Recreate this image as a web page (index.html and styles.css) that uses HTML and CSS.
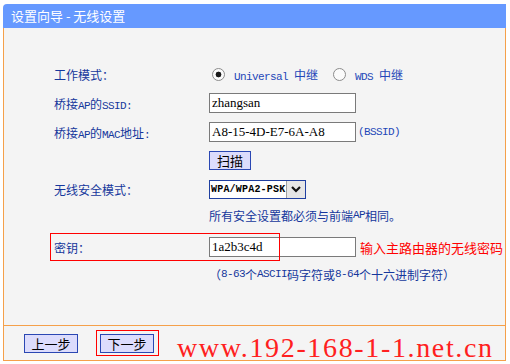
FILE: index.html
```html
<!DOCTYPE html>
<html lang="zh-CN">

<head>
    <meta charset="UTF-8">
    <title>设置向导 - 无线设置</title>
    <link rel="stylesheet" href="styles.css">
</head>

<body>
    <div class="wizard">
        <div class="title">设置向导 - 无线设置</div>
        <div class="panel">
            <div class="row">
                <span class="label">工作模式：</span>
                <span class="value">
                    <span class="radio on"></span><span class="opt"><span class="en">Universal </span>中继</span>
                    <span class="radio second"></span><span class="opt"><span class="en">WDS </span>中继</span>
                </span>
            </div>
            <div class="row r-gap">
                <span class="label">桥接<span class="en">AP</span>的<span class="en">SSID:</span></span>
                <input type="text" class="field" value="zhangsan">
            </div>
            <div class="row r-gap">
                <span class="label">桥接<span class="en">AP</span>的<span class="en">MAC</span>地址<span class="en">:</span></span>
                <input type="text" class="field" value="A8-15-4D-E7-6A-A8">
                <span class="en bssid">(BSSID)</span>
            </div>
            <div class="row r-scan">
                <span class="label"></span>
                <button type="button" class="btn scan">扫描</button>
            </div>
            <div class="row r-sec">
                <span class="label">无线安全模式：</span>
                <div class="select">
                    <span class="sel-text">WPA/WPA2-PSK</span>
                    <span class="arrow">
                        <svg width="12" height="9" viewBox="0 0 12 9"><path d="M2 2 L6 6 L10 2" fill="none" stroke="#111" stroke-width="2.2"/></svg>
                    </span>
                </div>
            </div>
            <div class="row r-note indent">所有安全设置都必须与前端<span class="en">AP</span>相同。</div>
            <div class="row r-key">
                <span class="label">密钥：</span>
                <input type="text" class="field" value="1a2b3c4d">
                <span class="tip">输入主路由器的无线密码</span>
                <span class="mark key-mark"></span>
            </div>
            <div class="row r-hint indent">（<span class="en">8-63</span>个<span class="en">ASCII</span>码字符或<span class="en">8-64</span>个十六进制字符）</div>
        </div>
        <div class="footer">
            <button type="button" class="btn step">上一步</button>
            <span class="marked">
                <button type="button" class="btn step">下一步</button>
                <span class="mark next-mark"></span>
            </span>
            <span class="watermark">www.192-168-1-1.net.cn</span>
        </div>
    </div>
</body>

</html>
```

FILE: styles.css
```css
body {
    margin: 0;
    background-color: #fff;
    font-family: "Noto Sans CJK SC", sans-serif;
}

.wizard {
    width: 503px;
    margin: 4px 0 0 3px;
}

.title {
    height: 24px;
    line-height: 24px;
    padding-left: 8px;
    background-color: #6699ff;
    color: #fff;
    font-size: 13px;
    border-top-left-radius: 4px;
}

.panel {
    height: 297px;
    box-sizing: border-box;
    padding: 36px 0 0 50px;
    background-color: #f4f4f4;
    border-left: 1px solid #f5a04a;
    border-right: 1px solid #f5a04a;
    font-size: 12px;
    color: #15379c;
}

.row {
    display: flex;
    align-items: center;
    height: 20px;
}

.r-gap {
    margin-top: 9px;
}

.r-scan {
    margin-top: 9px;
    height: 19px;
}

.r-sec {
    margin-top: 10px;
    height: 19px;
}

.r-note {
    margin-top: 6px;
}

.r-key {
    margin-top: 12px;
    position: relative;
}

.r-hint {
    margin-top: 7px;
}

.indent {
    padding-left: 155px;
}

.label {
    width: 155px;
    flex: none;
}

.en {
    font-family: "Liberation Mono", monospace;
    font-size: 11px;
    letter-spacing: -0.6px;
}

.value {
    display: flex;
    align-items: center;
    color: #2347b8;
}

.radio {
    width: 13px;
    height: 13px;
    box-sizing: border-box;
    flex: none;
    margin: 0 9px 0 3px;
    border: 1px solid #8c8c8c;
    border-radius: 50%;
    background-color: #fbfbfb;
}

.radio.on {
    background: radial-gradient(circle, #1a1a1a 0 2.6px, #fbfbfb 3.2px);
}

.radio.second {
    margin-left: 15px;
}

.opt {
    white-space: pre;
}

.field {
    width: 147px;
    height: 20px;
    box-sizing: border-box;
    margin: 0;
    padding: 0 2px;
    border: 1px solid #7a7a7a;
    background-color: #fff;
    color: #000;
    font-family: "Liberation Serif", serif;
    font-size: 13px;
    outline: none;
}

.bssid {
    margin-left: 2px;
    color: #2347b8;
}

.btn {
    height: 19px;
    box-sizing: border-box;
    margin: 0;
    padding: 0;
    border: 1px solid #2a47b3;
    background-color: #dcdcfc;
    color: #000;
    font-family: "Noto Sans CJK SC", sans-serif;
    font-size: 13px;
    line-height: 17px;
}

.scan {
    width: 42px;
}

.step {
    width: 54px;
}

.select {
    display: flex;
    width: 97px;
    height: 19px;
    box-sizing: border-box;
    border: 1px solid #1f3fa0;
    background-color: #fff;
}

.sel-text {
    flex: 1;
    padding-left: 1px;
    line-height: 17px;
    color: #000;
    font-family: "Liberation Mono", monospace;
    font-size: 10px;
    font-weight: bold;
    letter-spacing: 0.2px;
}

.arrow {
    width: 18px;
    display: flex;
    align-items: center;
    justify-content: center;
    background-color: #e6e6e6;
    border-left: 1px solid #a0a0a0;
}

.tip {
    margin-left: 4px;
    color: #ff0000;
    font-size: 13px;
    white-space: nowrap;
}

.mark {
    position: absolute;
    box-sizing: border-box;
    border: 1px solid #ff0000;
}

.key-mark {
    left: -4px;
    top: -4px;
    width: 230px;
    height: 28px;
}

.footer {
    position: relative;
    display: flex;
    align-items: flex-start;
    gap: 22px;
    height: 26px;
    padding: 8px 0 0 20px;
    background-color: #f4f4f4;
    border: 1px solid #f5a04a;
}

.marked {
    position: relative;
    display: flex;
}

.next-mark {
    left: -4px;
    top: -4px;
    width: 63px;
    height: 26px;
}

.watermark {
    position: absolute;
    left: 173px;
    top: 8px;
    font-family: "Liberation Serif", serif;
    font-size: 28px;
    line-height: 28px;
    letter-spacing: 1.65px;
    color: #ff2020;
    white-space: nowrap;
}
```
